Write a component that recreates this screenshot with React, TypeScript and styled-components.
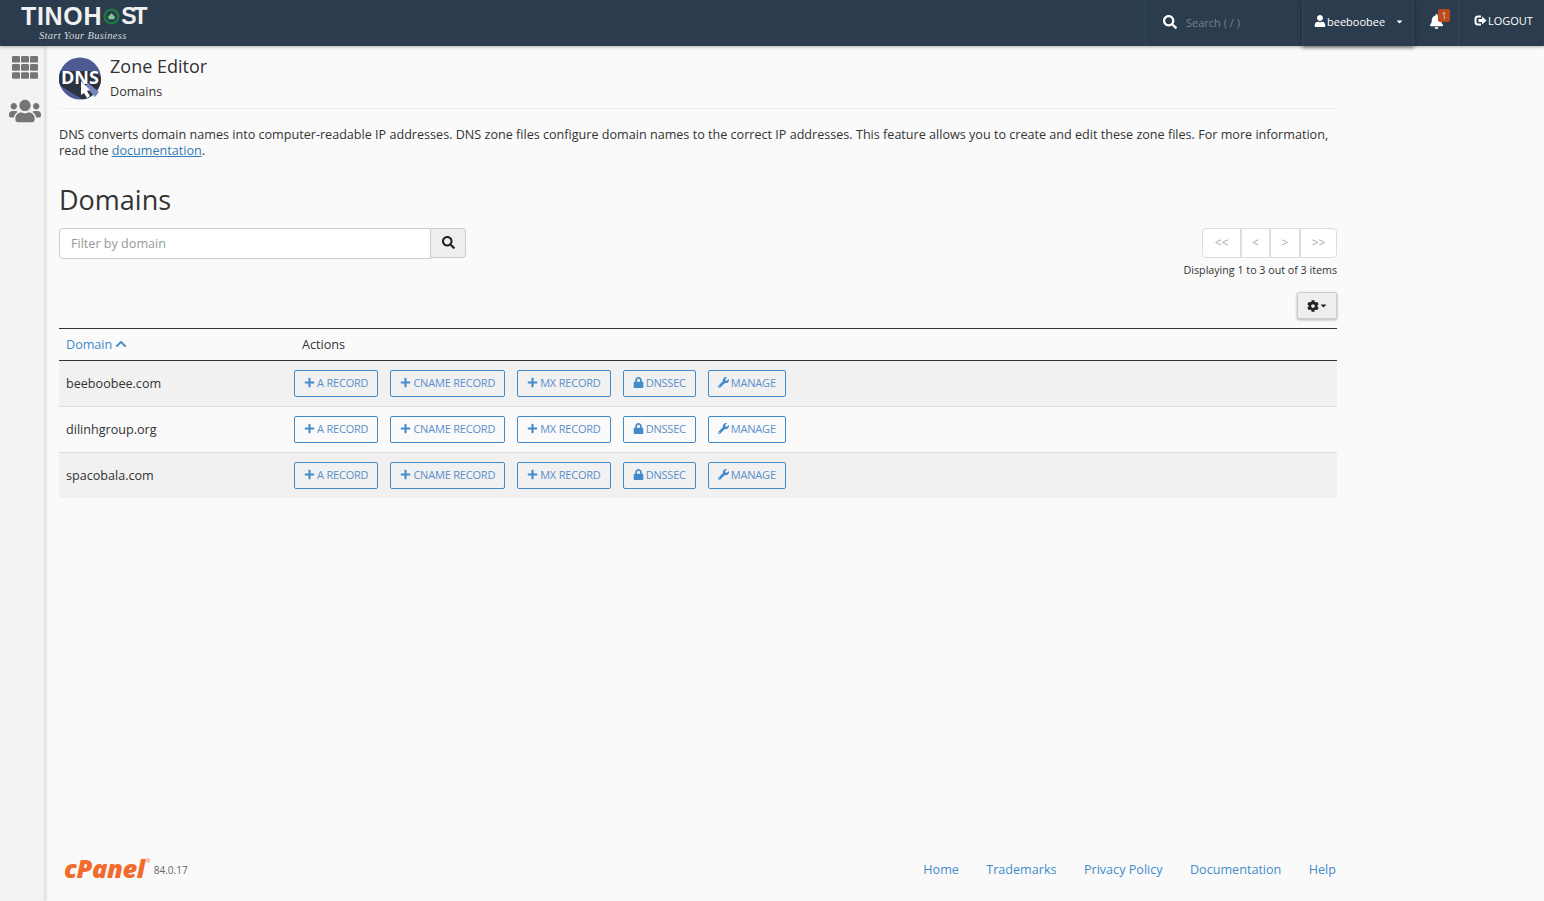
import styled, { createGlobalStyle } from "styled-components";
import { FaBell, FaChevronUp, FaCog, FaLock, FaPlus, FaSearch, FaUser, FaUsers, FaWrench, FaCaretDown } from "react-icons/fa";
import type { ReactNode } from "react";

const GlobalStyle = createGlobalStyle`
  html, body { margin: 0; padding: 0; height: 100%; }
  body {
    background: #fafafa;
    color: #333;
    font-family: "Open Sans", "Liberation Sans", sans-serif;
    font-size: 12.6px;
    overflow: hidden;
  }
  * { box-sizing: border-box; }
  a { color: #337ab7; }
`;

const Page = styled.div`
  height: 901px;
  display: flex;
  flex-direction: column;
`;

const TopBar = styled.header`
  height: 46px;
  flex: none;
  background: #2b3c4e;
  display: flex;
  align-items: stretch;
  color: #fff;
  position: relative;
  z-index: 2;
  box-shadow: 0 1px 3px rgba(0, 0, 0, 0.3);
`;

const Logo = styled.div`
  width: 1145px;
  padding: 3px 0 0 21px;
  display: flex;
  flex-direction: column;
`;

const LogoName = styled.div`
  display: flex;
  align-items: center;
  height: 26px;
  font-family: "Liberation Sans", sans-serif;
  font-weight: 700;
  font-size: 25px;
  letter-spacing: 0.7px;
  line-height: 26px;
  color: #f0f0f0;
`;

const LogoTight = styled.span`
  font-size: 23px;
  letter-spacing: -3px;
`;

const LogoTag = styled.div`
  font-family: "Liberation Serif", serif;
  font-style: italic;
  font-size: 10.5px;
  line-height: 12px;
  margin: 1px 0 0 18px;
  color: #d5d9dd;
  letter-spacing: 0.3px;
`;

const SearchCell = styled.div`
  width: 157px;
  border-left: 1px solid #34465a;
  display: flex;
  align-items: center;
  padding: 0 0 2px 17px;
  font-size: 14px;
`;

const SearchHint = styled.span`
  font-size: 11px;
  margin-left: 9px;
  color: #75828f;
`;

const UserCell = styled.div`
  width: 112px;
  height: 46px;
  border-left: 1px solid #34465a;
  border-right: 1px solid #34465a;
  display: flex;
  align-items: center;
  padding: 0 0 4px 11px;
  font-size: 11px;
  box-shadow: 0 2px 4px rgba(0, 0, 0, 0.4);
`;

const UserName = styled.span`
  margin-left: 1px;
  margin-right: 10px;
`;

const BellCell = styled.div`
  width: 45px;
  border-right: 1px solid #34465a;
  display: flex;
  align-items: center;
  padding: 0 0 4px 15px;
  font-size: 15px;
  position: relative;
`;

const Badge = styled.span`
  position: absolute;
  top: 9px;
  left: 24px;
  width: 12px;
  height: 13px;
  background: #bb4a1c;
  border-radius: 2px;
  font-size: 9px;
  line-height: 13px;
  text-align: center;
  color: #e8d5cc;
`;

const LogoutCell = styled.div`
  flex: 1;
  display: flex;
  align-items: center;
  padding: 0 0 6px 15px;
  font-size: 11px;
`;

const Body = styled.div`
  flex: 1;
  display: flex;
  min-height: 0;
`;

const SideBar = styled.nav`
  width: 45px;
  flex: none;
  background: #f3f3f3;
  border-right: 1px solid #e4e4e4;
  box-shadow: 1px 0 3px rgba(0, 0, 0, 0.15);
  display: flex;
  flex-direction: column;
  align-items: center;
  padding: 10px 0 0 5px;
  color: #757575;
  gap: 15px;
`;

const Main = styled.main`
  width: 1278px;
  margin-left: 14px;
  display: flex;
  flex-direction: column;
`;

const TitleRow = styled.div`
  display: flex;
  gap: 9px;
  height: 63px;
  padding-top: 6px;
  border-bottom: 1px solid #eee;
`;

const IconSlot = styled.div`
  margin-top: 5px;
  height: 44px;
`;

const TitleText = styled.div`
  display: flex;
  flex-direction: column;
`;

const PageTitle = styled.h1`
  margin: 0;
  font-size: 18px;
  font-weight: 400;
  line-height: 29px;
`;

const PageSub = styled.div`
  font-size: 12.6px;
  line-height: 18px;
  margin-top: 2px;
`;

const Intro = styled.p`
  margin: 18px 0 0;
  font-size: 12.6px;
  line-height: 16px;
  color: #333;
`;

const SectionTitle = styled.h2`
  margin: 23px 0 0;
  font-size: 27px;
  font-weight: 400;
  line-height: 36px;
`;

const Controls = styled.div`
  display: flex;
  justify-content: space-between;
  margin-top: 10px;
`;

const FilterGroup = styled.div`
  display: flex;
  align-items: flex-start;
`;

const FilterInput = styled.input`
  width: 372px;
  height: 31px;
  padding: 0 11px;
  border: 1px solid #ccc;
  border-radius: 4px 0 0 4px;
  background: #fff;
  font: 12.6px "Open Sans", sans-serif;
  color: #333;
  &::placeholder { color: #999; opacity: 1; }
`;

const FilterButton = styled.button`
  width: 35px;
  height: 30px;
  margin-left: 0;
  border: 1px solid #ccc;
  border-left: 0;
  border-radius: 0 4px 4px 0;
  background: #eee;
  color: #222;
  font-size: 13px;
  padding: 2px 0 0;
`;

const PagerColumn = styled.div`
  display: flex;
  flex-direction: column;
  align-items: flex-end;
`;

const Pager = styled.div`
  display: flex;
  height: 30px;
  border: 1px solid #ddd;
  border-radius: 4px;
  background: #fff;
`;

const PageLink = styled.span<{ $w: number }>`
  width: ${(p) => p.$w}px;
  display: flex;
  align-items: center;
  justify-content: center;
  color: #aaa;
  font-size: 12px;
  padding-bottom: 2px;
  & + & { border-left: 2px solid #ddd; }
`;

const Displaying = styled.div`
  font-size: 10.7px;
  line-height: 16px;
  margin-top: 4px;
`;

const GearRow = styled.div`
  display: flex;
  justify-content: flex-end;
  margin-top: 14px;
`;

const GearButton = styled.button`
  width: 40px;
  height: 27px;
  border: 1px solid #ccc;
  border-radius: 2px;
  background: #eee;
  box-shadow: 0 1px 3px rgba(0, 0, 0, 0.3);
  color: #222;
  display: flex;
  align-items: center;
  justify-content: center;
  font-size: 12px;
  padding: 0;
`;

const Table = styled.div`
  margin-top: 9px;
  border-top: 1px solid #333;
`;

const HeadRow = styled.div`
  display: grid;
  grid-template-columns: 235px 1fr;
  align-items: center;
  height: 32px;
  border-bottom: 1px solid #333;
  padding-bottom: 1px;
`;

const HeadDomain = styled.a`
  padding-left: 7px;
  color: #428bca;
  display: flex;
  align-items: center;
  gap: 3px;
  font-size: 12.6px;
`;

const HeadActions = styled.div`
  padding-left: 8px;
`;

const Row = styled.div<{ $shade: boolean }>`
  display: grid;
  grid-template-columns: 235px 1fr;
  align-items: center;
  height: 46px;
  background: ${(p) => (p.$shade ? "#f1f1f1" : "transparent")};
  border-bottom: 1px solid #ddd;
  &:last-child { border-bottom: 0; height: 45px; }
`;

const DomainCell = styled.div`
  padding: 0 0 0 7px;
  font-size: 12.6px;
`;

const Actions = styled.div`
  display: flex;
  gap: 12px;
`;

const ActionButton = styled.button`
  height: 27px;
  padding: 0 9px 3px;
  border: 1px solid #428bca;
  border-radius: 2px;
  background: transparent;
  color: #5b8fc9;
  font: 11px "Open Sans", sans-serif;
  letter-spacing: -0.2px;
  text-transform: uppercase;
  display: flex;
  align-items: center;
  gap: 2px;
  white-space: nowrap;
  svg { color: #428bca; font-size: 11px; }
`;

const Footer = styled.footer`
  margin-top: auto;
  height: 44px;
  display: flex;
  align-items: flex-start;
  justify-content: space-between;
  padding: 0 1px 0 5px;
`;

const Brand = styled.div`
  display: flex;
  align-items: center;
  height: 22px;
`;

const BrandName = styled.span`
  font-family: "Open Sans", sans-serif;
  font-weight: 800;
  font-style: italic;
  font-size: 25.5px;
  letter-spacing: -0.4px;
  color: #f26b2d;
`;

const BrandMark = styled.sup`
  font-size: 6px;
  color: #f26b2d;
  align-self: flex-start;
  margin: 0 0 0 1px;
  line-height: 8px;
`;

const Version = styled.span`
  font-size: 10px;
  color: #666;
  margin: 3px 0 0 3px;
`;

const FooterLinks = styled.div`
  display: flex;
  gap: 27.4px;
  padding-top: 4px;
`;

const FooterLink = styled.a`
  color: #428bca;
  font-size: 12.6px;
  line-height: 18px;
`;

const rows = ["beeboobee.com", "dilinhgroup.org", "spacobala.com"];

const actions: { icon: ReactNode; label: string }[] = [
  { icon: <FaPlus />, label: "A Record" },
  { icon: <FaPlus />, label: "CNAME Record" },
  { icon: <FaPlus />, label: "MX Record" },
  { icon: <FaLock />, label: "DNSSEC" },
  { icon: <FaWrench />, label: "Manage" },
];

function DnsIcon() {
  return (
    <svg width="42" height="44" viewBox="0 0 42 44" style={{ display: "block" }}>
      <defs>
        <clipPath id="disc">
          <circle cx="21" cy="21.5" r="21" />
        </clipPath>
      </defs>
      <circle cx="21" cy="21.5" r="21" fill="#4d5a94" />
      <path d="M0 14 H36 L42 20 V44 H26 L0 28 Z" fill="#2b3342" clipPath="url(#disc)" />
      <text x="2" y="27" fontFamily="Open Sans, sans-serif" fontWeight="700" fontSize="18" fill="#fff">
        DNS
      </text>
      <path d="M26 29 L29 26 L40 35 L36 40 Z" fill="#7585bd" />
      <path d="M22 24 L31 33 L28 34 L31 39 L28 41 L25 36 L22 38 Z" fill="#fff" />
    </svg>
  );
}

function AppsGrid() {
  const cells = [0, 9, 18];
  return (
    <svg width="26" height="24" viewBox="0 0 26 24">
      {cells.map((y) =>
        cells.map((x) => <rect key={`${x}-${y}`} x={x} y={y * 0.9} width="8" height="6.6" rx="1.2" fill="#757575" />)
      )}
    </svg>
  );
}

function LogoBadge() {
  return (
    <svg width="17" height="17" viewBox="0 0 18 18" style={{ margin: "0 1px" }}>
      <circle cx="9" cy="9" r="8.5" fill="#1f7a3f" />
      <circle cx="9" cy="9" r="6" fill="#2b3c4e" />
      <path d="M4.5 10 L9 5.5 L13.5 10 L12 10 L12 12 L6 12 L6 10 Z" fill="#7fc98f" />
    </svg>
  );
}

function LogoutIcon() {
  return (
    <svg width="13" height="11" viewBox="0 0 13 11" style={{ marginRight: 1 }}>
      <path d="M7 1.5 H4 Q1.5 1.5 1.5 4 V7 Q1.5 9.5 4 9.5 H7" fill="none" stroke="#fff" strokeWidth="2" />
      <path d="M4.5 4 H8 V1.5 L12.5 5.5 L8 9.5 V7 H4.5 Z" fill="#fff" />
    </svg>
  );
}

export default function App() {
  return (
    <Page>
      <GlobalStyle />
      <TopBar>
        <Logo>
          <LogoName>
            TINOH
            <LogoBadge />
            <LogoTight>ST</LogoTight>
          </LogoName>
          <LogoTag>Start Your Business</LogoTag>
        </Logo>
        <SearchCell>
          <FaSearch />
          <SearchHint>Search ( / )</SearchHint>
        </SearchCell>
        <UserCell>
          <FaUser size={12} />
          <UserName>beeboobee</UserName>
          <FaCaretDown size={9} />
        </UserCell>
        <BellCell>
          <FaBell />
          <Badge>1</Badge>
        </BellCell>
        <LogoutCell>
          <LogoutIcon />
          LOGOUT
        </LogoutCell>
      </TopBar>
      <Body>
        <SideBar>
          <AppsGrid />
          <FaUsers size={32} />
        </SideBar>
        <Main>
          <TitleRow>
            <IconSlot>
              <DnsIcon />
            </IconSlot>
            <TitleText>
              <PageTitle>Zone Editor</PageTitle>
              <PageSub>Domains</PageSub>
            </TitleText>
          </TitleRow>
          <Intro>
            DNS converts domain names into computer-readable IP addresses. DNS zone files configure domain names to the
            correct IP addresses. This feature allows you to create and edit these zone files. For more information,
            read the <a href="#docs">documentation</a>.
          </Intro>
          <SectionTitle>Domains</SectionTitle>
          <Controls>
            <FilterGroup>
              <FilterInput placeholder="Filter by domain" />
              <FilterButton>
                <FaSearch />
              </FilterButton>
            </FilterGroup>
            <PagerColumn>
              <Pager>
                <PageLink $w={37}>&lt;&lt;</PageLink>
                <PageLink $w={29}>&lt;</PageLink>
                <PageLink $w={30}>&gt;</PageLink>
                <PageLink $w={37}>&gt;&gt;</PageLink>
              </Pager>
              <Displaying>Displaying 1 to 3 out of 3 items</Displaying>
            </PagerColumn>
          </Controls>
          <GearRow>
            <GearButton>
              <FaCog />
              <FaCaretDown size={9} />
            </GearButton>
          </GearRow>
          <Table>
            <HeadRow>
              <HeadDomain>
                Domain <FaChevronUp size={12} />
              </HeadDomain>
              <HeadActions>Actions</HeadActions>
            </HeadRow>
            {rows.map((domain, i) => (
              <Row key={domain} $shade={i % 2 === 0}>
                <DomainCell>{domain}</DomainCell>
                <Actions>
                  {actions.map((a) => (
                    <ActionButton key={a.label}>
                      {a.icon}
                      {a.label}
                    </ActionButton>
                  ))}
                </Actions>
              </Row>
            ))}
          </Table>
          <Footer>
            <Brand>
              <BrandName>cPanel</BrandName>
              <BrandMark>®</BrandMark>
              <Version>84.0.17</Version>
            </Brand>
            <FooterLinks>
              <FooterLink>Home</FooterLink>
              <FooterLink>Trademarks</FooterLink>
              <FooterLink>Privacy Policy</FooterLink>
              <FooterLink>Documentation</FooterLink>
              <FooterLink>Help</FooterLink>
            </FooterLinks>
          </Footer>
        </Main>
      </Body>
    </Page>
  );
}
